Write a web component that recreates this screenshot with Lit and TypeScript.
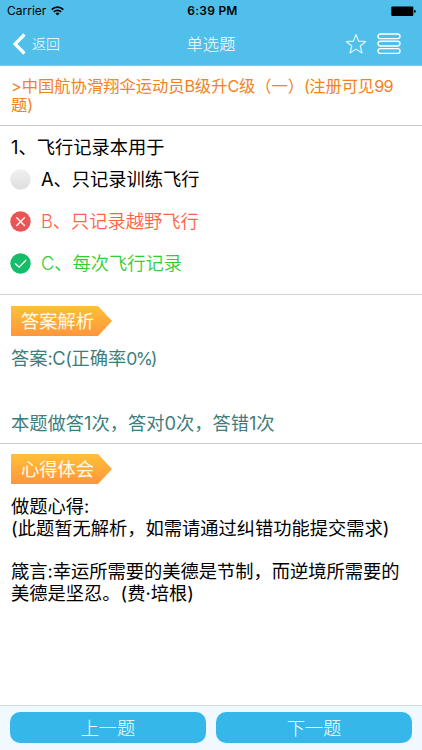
import { LitElement, html, css, svg } from "lit";
import { customElement, property } from "lit/decorators.js";

type Mark = "none" | "wrong" | "right";

@customElement("option-row")
class OptionRow extends LitElement {
  @property() mark: Mark = "none";
  @property() label = "";

  static styles = css`
    :host { display: block; }
    .row { display: flex; align-items: center; height: 42px; gap: 10px; white-space: nowrap; }
    .none { color: #000; }
    .wrong { color: #ff6347; font-weight: 350; }
    .right { color: #32cd32; font-weight: 350; }
    svg { width: 21px; height: 21px; flex: none; }
  `;

  render() {
    const glyph =
      this.mark === "wrong"
        ? svg`<circle cx="10.5" cy="10.5" r="10.2" fill="#ea5455"/><path d="M6.8 6.8l7.6 7.6M14.4 6.8l-7.6 7.6" stroke="#fff" stroke-width="1.4" stroke-linecap="round"/>`
        : this.mark === "right"
          ? svg`<circle cx="10.5" cy="10.5" r="10.2" fill="#14bd68"/><path d="M5.4 10.7l3.7 3.5 6.8-7" fill="none" stroke="#fff" stroke-width="1.3" stroke-linecap="round"/>`
          : svg`<defs><linearGradient id="g" x2="0" y2="1"><stop stop-color="#f0f0f0"/><stop offset="1" stop-color="#dedede"/></linearGradient></defs><circle cx="10.5" cy="10.5" r="10.2" fill="url(#g)"/>`;
    return html`<div class="row ${this.mark}"><svg viewBox="0 0 21 21">${glyph}</svg><span>${this.label}</span></div>`;
  }
}

@customElement("ribbon-label")
class RibbonLabel extends LitElement {
  @property() label = "";

  static styles = css`
    :host { display: block; }
    .ribbon {
      box-sizing: border-box; width: 101px; height: 30px; padding-left: 10px;
      line-height: 30px; color: #fffbe8; white-space: nowrap;
      background: linear-gradient(#ffc038, #ff963c);
      clip-path: polygon(0 0, 87px 0, 100% 50%, 87px 100%, 0 100%);
    }
  `;

  render() {
    return html`<div class="ribbon">${this.label}</div>`;
  }
}

@customElement("app-root")
class AppRoot extends LitElement {
  static styles = css`
    :host {
      display: flex; flex-direction: column; height: 750px; background: #fff; overflow: hidden;
      font-family: Inter, "Noto Sans CJK SC", sans-serif; font-size: 18.25px; line-height: 22px; color: #000;
    }
    .top { background: #50c0eb; height: 65px; border-bottom: 1px solid #80cce8; flex: none; }
    .status { display: grid; grid-template-columns: 1fr auto 1fr; align-items: center; height: 22px; padding: 0 6px 0 7px; font-size: 12px; }
    .carrier { display: flex; align-items: center; gap: 5px; }
    .carrier svg { width: 13px; height: 10px; }
    .time { font-weight: 600; letter-spacing: 0.25px; padding-left: 2px; }
    .battery { justify-self: end; width: 25px; height: 11px; }
    .nav { display: grid; grid-template-columns: 1fr auto 1fr; align-items: center; height: 43px; padding: 0 21px 0 13px; color: #fff; font-weight: 300; }
    .back { display: flex; align-items: center; gap: 6px; font-size: 14px; }
    .back svg { width: 13px; height: 22px; }
    .name { font-size: 16.3px; padding-left: 8px; }
    .tools { display: flex; justify-content: flex-end; align-items: center; gap: 10px; }
    .star { width: 22px; height: 22px; }
    .menu { width: 24px; height: 22px; }
    .paper { box-sizing: border-box; height: 60px; padding: 10.5px 11px 0; font-size: 16.3px; line-height: 19.5px; color: #f58220; white-space: nowrap; border-bottom: 1px solid #ccc; }
    .count { letter-spacing: -0.9px; }
    .latin { letter-spacing: -0.4px; }
    .question { box-sizing: border-box; height: 169px; padding: 10px 11px 0 10px; border-bottom: 1px solid #d2d2d2; }
    .stem { padding-left: 1px; height: 22px; }
    .analysis { box-sizing: border-box; height: 149px; padding: 11px 11px 0; color: #3d7e7c; border-bottom: 1px solid #ccc; white-space: nowrap; }
    .answer { margin-top: 11px; }
    .rate { font-size: 17.5px; letter-spacing: -1.7px; }
    .stats { margin-top: 42px; }
    .notes { flex: 1; padding: 10px 11px 0; white-space: nowrap; }
    .text { margin-top: 12px; line-height: 21.8px; }
    .text p { margin: 0; }
    .gap { height: 21.8px; }
    .footer { box-sizing: border-box; height: 45px; padding: 6px 10px 0; display: flex; gap: 10px; background: #eff9fe; border-top: 1px solid #d2dce0; }
    .btn { flex: 1; height: 31px; border: 0; padding: 0; border-radius: 10px; background: #35b7e9; color: #fff; font: inherit; font-weight: 300; line-height: 30px; }
  `;

  render() {
    return html`
      <header class="top">
        <div class="status">
          <div class="carrier"><span>Carrier</span>
            <svg viewBox="0 0 13 10" fill="none" stroke="#000" stroke-width="1.7"><path d="M.7 3.6a8.2 8.2 0 0 1 11.6 0M2.8 5.9a5.2 5.2 0 0 1 7.4 0"/><path d="M6.5 9.6L4.4 7.5a3 3 0 0 1 4.2 0z" fill="#000" stroke="none"/></svg>
          </div>
          <span class="time">6:39 PM</span>
          <svg class="battery" viewBox="0 0 25 11"><rect x=".3" y=".5" width="22" height="9.5" rx="1"/><path d="M23.2 3.8q1.6.3 1.6 1.6t-1.6 1.6z"/></svg>
        </div>
        <nav class="nav">
          <div class="back"><svg viewBox="0 0 13 22"><path d="M11.5 1.5L2 11l9.5 9.5" fill="none" stroke="#fff" stroke-width="3.2"/></svg><span>返回</span></div>
          <span class="name">单选题</span>
          <div class="tools">
            <svg class="star" viewBox="0 0 22 22"><path d="M11 1.5l2.6 6.600 7.100.400-5.500 4.500 1.800 7-6-3.900-6 3.900 1.800-7L1.300 8.500l7.100-.400z" fill="none" stroke="#e6f8ff" stroke-width="1.1" stroke-linejoin="round"/></svg>
            <svg class="menu" viewBox="0 0 24 22" fill="none" stroke="#fff" stroke-width="1.4"><rect x="1" y="1" width="22" height="4.6" rx="2.3"/><rect x="1" y="8.2" width="22" height="4.8" rx="2.4"/><rect x="1" y="15.6" width="22" height="4.8" rx="2.4"/></svg>
          </div>
        </nav>
      </header>
      <section class="paper">&gt;中国航协滑翔伞运动员<span class="latin">B</span>级升<span class="latin">C</span>级（一）<span class="count">(</span>注册可见<span class="count">99</span><br>题)</section>
      <section class="question">
        <div class="stem">1、飞行记录本用于</div>
        <option-row label="A、只记录训练飞行"></option-row>
        <option-row mark="wrong" label="B、只记录越野飞行"></option-row>
        <option-row mark="right" label="C、每次飞行记录"></option-row>
      </section>
      <section class="analysis">
        <ribbon-label label="答案解析"></ribbon-label>
        <div class="answer">答案<span class="latin">:C(</span>正确率<span class="rate">0%)</span></div>
        <div class="stats">本题做答1次，答对0次，答错1次</div>
      </section>
      <section class="notes">
        <ribbon-label label="心得体会"></ribbon-label>
        <div class="text">
          <p>做题心得:</p>
          <p>(此题暂无解析，如需请通过纠错功能提交需求)</p>
          <div class="gap"></div>
          <p>箴言:幸运所需要的美德是节制，而逆境所需要的</p>
          <p>美德是坚忍。(费·培根)</p>
        </div>
      </section>
      <footer class="footer">
        <button class="btn">上一题</button>
        <button class="btn">下一题</button>
      </footer>
    `;
  }
}
